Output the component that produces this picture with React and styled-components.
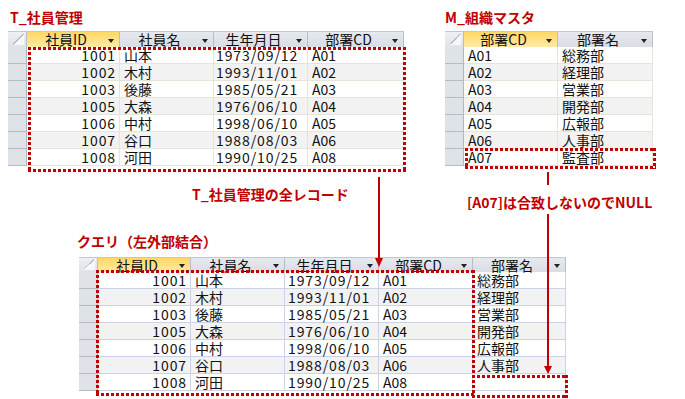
import React from 'react';
import styled, { createGlobalStyle } from 'styled-components';

const RED = '#c00000';

const GlobalStyle = createGlobalStyle`
  body {
    margin: 0;
    background: #fff;
    font-family: "Noto Sans CJK JP", "Liberation Sans", sans-serif;
  }
`;

const employees = [
  ['1001', '山本', '1973/09/12', 'A01'],
  ['1002', '木村', '1993/11/01', 'A02'],
  ['1003', '後藤', '1985/05/21', 'A03'],
  ['1005', '大森', '1976/06/10', 'A04'],
  ['1006', '中村', '1998/06/10', 'A05'],
  ['1007', '谷口', '1988/08/03', 'A06'],
  ['1008', '河田', '1990/10/25', 'A08'],
];

const depts = [
  ['A01', '総務部'],
  ['A02', '経理部'],
  ['A03', '営業部'],
  ['A04', '開発部'],
  ['A05', '広報部'],
  ['A06', '人事部'],
  ['A07', '監査部'],
];

const deptName = Object.fromEntries(depts);

// left outer join: every employee, 部署名 empty when no match
const queryRows = employees.map((r) => [...r, deptName[r[3]] || '']);

const empCols = [
  { label: '社員ID', w: 93, align: 'right', num: true, active: true },
  { label: '社員名', w: 94 },
  { label: '生年月日', w: 94, num: true, pad: 2 },
  { label: '部署CD', w: 96 },
];

const deptCols = [
  { label: '部署CD', w: 94, active: true },
  { label: '部署名', w: 95 },
];

const queryCols = [
  { label: '社員ID', w: 93, align: 'right', num: true, active: true },
  { label: '社員名', w: 94 },
  { label: '生年月日', w: 94, num: true, pad: 3 },
  { label: '部署CD', w: 94 },
  { label: '部署名', w: 93 },
];

function Datasheet({ cols, rows, headH = 16, line = '#e6e3d8', children }) {
  return (
    <Sheet $cols={cols.map((c) => c.w + 'px').join(' ')}>
      <Corner $h={headH} />
      {cols.map((c) => (
        <HeadCell key={c.label} $h={headH} $active={c.active}>
          {c.label}
        </HeadCell>
      ))}
      {rows.map((row, i) => (
        <React.Fragment key={i}>
          <Selector />
          {cols.map((c, j) => (
            <Cell key={j} $align={c.align} $num={c.num} $pad={c.pad} $alt={i % 2 === 1} $line={line}>
              {row[j]}
            </Cell>
          ))}
        </React.Fragment>
      ))}
      {children}
    </Sheet>
  );
}

export default function App() {
  return (
    <Canvas>
      <GlobalStyle />
      <TopRow>
        <Panel>
          <Title $indent={2}>T_社員管理</Title>
          <Datasheet cols={empCols} rows={employees}>
            <Highlight $x={20} $y={16} $w={378} $h={125} />
          </Datasheet>
        </Panel>
        <Panel>
          <Title>M_組織マスタ</Title>
          <Datasheet cols={deptCols} rows={depts}>
            <Highlight $x={20} $y={117} $w={191} $h={21} />
          </Datasheet>
        </Panel>
      </TopRow>

      <NoteRow>
        <Note $top={20} $left={192}>T_社員管理の全レコード</Note>
        <Note $top={28}>[A07]は合致しないのでNULL</Note>
      </NoteRow>

      <BottomPanel>
        <Title $indent={-2}>クエリ（左外部結合）</Title>
        <Datasheet cols={queryCols} rows={queryRows} headH={15} line="#cad4e4">
          <Highlight $x={17} $y={13} $w={379} $h={126} />
          <Highlight $x={393} $y={118} $w={96} $h={23} />
        </Datasheet>
      </BottomPanel>

      <Arrows width="685" height="399" viewBox="0 0 685 399">
        <line x1="379" y1="177" x2="379" y2="260" stroke={RED} strokeWidth="2" />
        <polygon points="375,258 383,258 379,267" fill={RED} />
        <line x1="548" y1="172" x2="548" y2="185" stroke={RED} strokeWidth="2" />
        <line x1="548" y1="214" x2="548" y2="368" stroke={RED} strokeWidth="2" />
        <polygon points="544,366 552,366 548,374" fill={RED} />
      </Arrows>
    </Canvas>
  );
}

const Canvas = styled.div`
  position: relative;
  width: 685px;
  height: 399px;
  box-sizing: border-box;
  padding-top: 9px;
  overflow: hidden;
  background: #fff;
`;

const TopRow = styled.div`
  display: flex;
  align-items: flex-start;
  gap: 41px;
  padding-left: 8px;
`;

const Panel = styled.section`
  display: flex;
  flex-direction: column;
  gap: 6px;
`;

const BottomPanel = styled(Panel)`
  gap: 8px;
  margin-left: 79px;
`;

const Title = styled.h2`
  margin: 0 0 0 ${(p) => p.$indent || 0}px;
  font-size: 14px;
  line-height: 16px;
  font-weight: 700;
  color: ${RED};
  white-space: nowrap;
`;

const NoteRow = styled.div`
  display: grid;
  grid-template-columns: 467px 1fr;
  height: 67px;
`;

const Note = styled.p`
  margin: ${(p) => p.$top}px 0 0 ${(p) => p.$left || 0}px;
  font-size: 14px;
  line-height: 16px;
  font-weight: 700;
  color: ${RED};
  white-space: nowrap;
`;

const Sheet = styled.div`
  position: relative;
  display: grid;
  grid-template-columns: 19px ${(p) => p.$cols};
  width: max-content;
  font-size: 14px;
  line-height: 17px;
  color: #111;
`;

const Corner = styled.div`
  position: relative;
  height: ${(p) => p.$h}px;
  box-sizing: border-box;
  border-top: 1px solid #c3c8cf;
  border-right: 1px solid #b9bec6;
  background: linear-gradient(#eef0f3, #dfe2e7);

  &::after {
    content: '';
    position: absolute;
    right: 2px;
    bottom: 2px;
    width: 11px;
    height: 11px;
    background: linear-gradient(to top left, #f6f7f9 50%, #b9bec6 50%, #b9bec6 56%, transparent 56%);
  }
`;

const HeadCell = styled.div`
  position: relative;
  height: ${(p) => p.$h}px;
  box-sizing: border-box;
  padding-right: 14px;
  border-top: 1px solid #c3c8cf;
  border-right: 1px solid #b9bec6;
  background: ${(p) =>
    p.$active ? 'linear-gradient(#ffd764, #ffeaa4)' : 'linear-gradient(#e6e9ee, #d9dde4)'};
  text-align: center;
  line-height: ${(p) => p.$h - 1}px;
  white-space: nowrap;

  &::after {
    content: '';
    position: absolute;
    right: 5px;
    bottom: 4px;
    border-left: 3.5px solid transparent;
    border-right: 3.5px solid transparent;
    border-top: 4px solid #222;
  }
`;

const Selector = styled.div`
  height: 17px;
  box-sizing: border-box;
  border-right: 1px solid #b1b7bf;
  border-bottom: 1px solid #b6bcc4;
  background: #dfe3e8;
`;

const Cell = styled.div`
  height: 17px;
  box-sizing: border-box;
  padding: 0 ${(p) => (p.$align === 'right' ? 3 : 4)}px 0 ${(p) => (p.$pad != null ? p.$pad : 4)}px;
  border-right: 1px solid ${(p) => p.$line};
  border-bottom: 1px solid ${(p) => p.$line};
  background: ${(p) => (p.$alt ? '#f2f2f2' : '#fff')};
  text-align: ${(p) => p.$align || 'left'};
  letter-spacing: ${(p) => (p.$num ? '0.9px' : '0')};
  line-height: 16px;
  white-space: nowrap;
`;

const dots = (dir) => `repeating-linear-gradient(${dir}, ${RED} 0 3px, transparent 3px 5px)`;

const Highlight = styled.div`
  position: absolute;
  left: ${(p) => p.$x}px;
  top: ${(p) => p.$y}px;
  width: ${(p) => p.$w}px;
  height: ${(p) => p.$h}px;
  pointer-events: none;
  background:
    ${dots('90deg')} top left / 100% 3px no-repeat,
    ${dots('90deg')} bottom left / 100% 3px no-repeat,
    ${dots('180deg')} top left / 3px 100% no-repeat,
    ${dots('180deg')} top right / 3px 100% no-repeat;
`;

const Arrows = styled.svg`
  position: absolute;
  left: 0;
  top: 0;
  pointer-events: none;
`;
